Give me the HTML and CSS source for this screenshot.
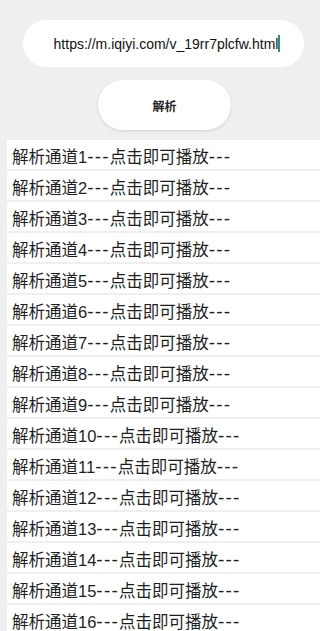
FILE: index.html
```html
<!DOCTYPE html>
<html lang="zh-CN">
<head>
    <meta charset="UTF-8">
    <meta name="viewport" content="width=device-width, initial-scale=1.0">
    <title>解析</title>
    <link rel="stylesheet" href="styles.css">
</head>
<body>
    <div class="page">
        <!-- 输入地址 -->
        <div class="url-box">
            <span class="url-text">https://m.iqiyi.com/v_19rr7plcfw.html</span><span class="caret"></span>
        </div>

        <button class="btn-parse">解析</button>

        <!-- 通道列表 -->
        <ul class="channel-list">
            <li>解析通道1<span class="dash">---</span>点击即可播放<span class="dash">---</span></li>
            <li>解析通道2<span class="dash">---</span>点击即可播放<span class="dash">---</span></li>
            <li>解析通道3<span class="dash">---</span>点击即可播放<span class="dash">---</span></li>
            <li>解析通道4<span class="dash">---</span>点击即可播放<span class="dash">---</span></li>
            <li>解析通道5<span class="dash">---</span>点击即可播放<span class="dash">---</span></li>
            <li>解析通道6<span class="dash">---</span>点击即可播放<span class="dash">---</span></li>
            <li>解析通道7<span class="dash">---</span>点击即可播放<span class="dash">---</span></li>
            <li>解析通道8<span class="dash">---</span>点击即可播放<span class="dash">---</span></li>
            <li>解析通道9<span class="dash">---</span>点击即可播放<span class="dash">---</span></li>
            <li>解析通道10<span class="dash">---</span>点击即可播放<span class="dash">---</span></li>
            <li>解析通道11<span class="dash">---</span>点击即可播放<span class="dash">---</span></li>
            <li>解析通道12<span class="dash">---</span>点击即可播放<span class="dash">---</span></li>
            <li>解析通道13<span class="dash">---</span>点击即可播放<span class="dash">---</span></li>
            <li>解析通道14<span class="dash">---</span>点击即可播放<span class="dash">---</span></li>
            <li>解析通道15<span class="dash">---</span>点击即可播放<span class="dash">---</span></li>
            <li>解析通道16<span class="dash">---</span>点击即可播放<span class="dash">---</span></li>
        </ul>
    </div>
</body>
</html>
```

FILE: styles.css
```css
body {
    margin: 0;
    background: #efefef;
    font-family: "Liberation Sans", "Noto Sans CJK SC", sans-serif;
    color: #222;
}
.page {
    padding-top: 20px;
}
.url-box {
    margin: 0 16px 0 23px;
    padding-left: 7px;
    height: 47px;
    border-radius: 24px;
    background: #fff;
    display: flex;
    align-items: center;
    justify-content: center;
    font-size: 14px;
    color: #111;
}
.caret {
    display: inline-block;
    width: 2px;
    height: 17px;
    background: #1a9a86;
}
.btn-parse {
    display: block;
    margin: 13px 0 0 98px;
    width: 133px;
    height: 50px;
    border: none;
    border-radius: 25px;
    background: #fff;
    box-shadow: 0 1px 3px rgba(0, 0, 0, 0.12);
    font-family: "Noto Sans CJK SC", sans-serif;
    font-size: 12px;
    font-weight: bold;
    color: #222;
    padding: 0;
}
.channel-list {
    list-style: none;
    margin: 10px 0 0 7px;
    padding: 0;
}
.channel-list li {
    height: 29px;
    line-height: 33px;
    margin-bottom: 2px;
    padding-left: 5px;
    background: #fff;
    font-size: 16.5px;
    color: #1e1e1e;
    white-space: nowrap;
}
.dash {
    font-size: 19px;
    letter-spacing: 1.2px;
}
```
